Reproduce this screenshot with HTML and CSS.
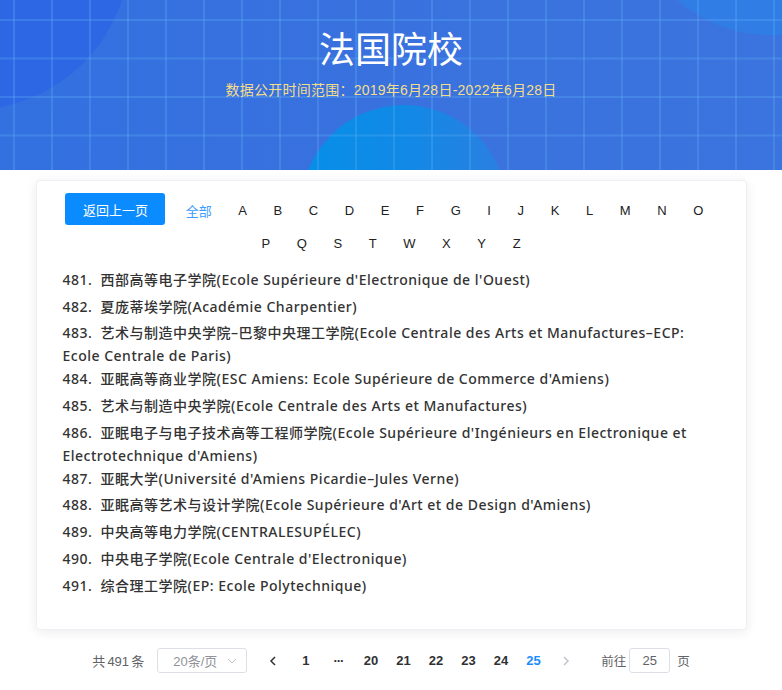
FILE: index.html
```html
<!DOCTYPE html>
<html lang="zh-CN">
<head>
<meta charset="utf-8">
<title>法国院校</title>
<link rel="stylesheet" href="styles.css">
</head>
<body>
<header class="hero">
  <div class="circle c1"></div>
  <div class="circle c2"></div>
  <div class="circle c3"></div>
  <div class="hero-text">
    <h1 class="title">法国院校</h1>
    <p class="sub">数据公开时间范围：2019年6月28日-2022年6月28日</p>
  </div>
</header>

<main class="card">
  <nav class="letters">
    <button class="back">返回上一页</button>
    <a class="letter active">全部</a>
    <a class="letter">A</a>
    <a class="letter">B</a>
    <a class="letter">C</a>
    <a class="letter">D</a>
    <a class="letter">E</a>
    <a class="letter">F</a>
    <a class="letter">G</a>
    <a class="letter">I</a>
    <a class="letter">J</a>
    <a class="letter">K</a>
    <a class="letter">L</a>
    <a class="letter">M</a>
    <a class="letter">N</a>
    <a class="letter">O</a>
    <a class="letter">P</a>
    <a class="letter">Q</a>
    <a class="letter">S</a>
    <a class="letter">T</a>
    <a class="letter">W</a>
    <a class="letter">X</a>
    <a class="letter">Y</a>
    <a class="letter">Z</a>
  </nav>
  <ul class="list">
    <li>481.&nbsp;&nbsp;西部高等电子学院(Ecole Supérieure d'Electronique de l'Ouest)</li>
    <li>482.&nbsp;&nbsp;夏庞蒂埃学院(Académie Charpentier)</li>
    <li>483.&nbsp;&nbsp;艺术与制造中央学院–巴黎中央理工学院(Ecole Centrale des Arts et Manufactures–ECP: Ecole Centrale de Paris)</li>
    <li>484.&nbsp;&nbsp;亚眠高等商业学院(ESC Amiens: Ecole Supérieure de Commerce d'Amiens)</li>
    <li>485.&nbsp;&nbsp;艺术与制造中央学院(Ecole Centrale des Arts et Manufactures)</li>
    <li>486.&nbsp;&nbsp;亚眠电子与电子技术高等工程师学院(Ecole Supérieure d'Ingénieurs en Electronique et Electrotechnique d'Amiens)</li>
    <li>487.&nbsp;&nbsp;亚眠大学(Université d'Amiens Picardie–Jules Verne)</li>
    <li>488.&nbsp;&nbsp;亚眠高等艺术与设计学院(Ecole Supérieure d'Art et de Design d'Amiens)</li>
    <li>489.&nbsp;&nbsp;中央高等电力学院(CENTRALESUPÉLEC)</li>
    <li>490.&nbsp;&nbsp;中央电子学院(Ecole Centrale d'Electronique)</li>
    <li>491.&nbsp;&nbsp;综合理工学院(EP: Ecole Polytechnique)</li>
  </ul>
</main>

<div class="pager">
  <span class="total">共 491 条</span>
  <div class="select">
    <span>20条/页</span>
    <svg class="caret" width="10" height="6" viewBox="0 0 10 6"><polyline points="1,1 5,5 9,1" fill="none" stroke="#c0c4cc" stroke-width="1"/></svg>
  </div>
  <span class="btn arrow"><svg width="8" height="10" viewBox="0 0 8 10"><polyline points="6,1 2,5 6,9" fill="none" stroke="#303133" stroke-width="1.5"/></svg></span>
  <span class="btn">1</span>
  <span class="btn more">···</span>
  <span class="btn">20</span>
  <span class="btn">21</span>
  <span class="btn">22</span>
  <span class="btn">23</span>
  <span class="btn">24</span>
  <span class="btn current">25</span>
  <span class="btn arrow"><svg width="8" height="10" viewBox="0 0 8 10"><polyline points="2,1 6,5 2,9" fill="none" stroke="#c0c4cc" stroke-width="1.5"/></svg></span>
  <span class="jump">前往</span>
  <span class="page-input">25</span>
  <span class="unit">页</span>
</div>
</body>
</html>
```

FILE: styles.css
```css
body {
  margin: 0;
  background: #fff;
  font-family: "Liberation Sans", "Noto Sans CJK SC", sans-serif;
}

.hero {
  position: relative;
  height: 170px;
  overflow: hidden;
  background: linear-gradient(90deg, #3370e0 0%, #3a72de 60%, #3b74de 100%);
  text-align: center;
}

.hero::after {
  content: "";
  position: absolute;
  inset: 0;
  background-image:
    linear-gradient(to right, rgba(95, 175, 245, 0.3) 2px, transparent 2px),
    linear-gradient(to bottom, rgba(95, 175, 245, 0.3) 2px, transparent 2px);
  background-size: 38px 38.5px;
  background-position: 13px 19px;
  z-index: 1;
}

.circle {
  position: absolute;
  border-radius: 50%;
}

.c1 {
  left: -190px;
  top: -210px;
  width: 320px;
  height: 320px;
  background: #2d67e4;
}

.c2 {
  left: 629px;
  top: -247px;
  width: 282px;
  height: 282px;
  background: #317de6;
}

.c3 {
  left: 301px;
  top: 105px;
  width: 206px;
  height: 206px;
  background: linear-gradient(90deg, #068fe8 0%, #1189e6 50%, #2c7fe1 100%);
}

.hero-text {
  position: relative;
  z-index: 2;
}

.title {
  margin: 0;
  padding-top: 26px;
  font-family: "Noto Sans CJK SC", sans-serif;
  font-size: 36px;
  line-height: 43px;
  font-weight: 400;
  color: #fff;
}

.sub {
  margin: 11px 0 0;
  font-size: 14px;
  line-height: 20px;
  letter-spacing: 0.25px;
  color: #f4dd8b;
}

.card {
  box-sizing: border-box;
  width: 711px;
  margin: 10px auto 0;
  padding: 12px 26px 29px;
  background: #fff;
  border: 1px solid #eef0f6;
  border-radius: 4px;
  box-shadow: 0 2px 12px rgba(0, 0, 0, 0.08);
}

.letters {
  display: flex;
  flex-wrap: wrap;
  justify-content: center;
  align-items: flex-end;
  row-gap: 5px;
  margin: 0 -10px;
}

.back {
  width: 100px;
  height: 32px;
  margin-right: 7px;
  padding: 0;
  border: 0;
  border-radius: 3px;
  background: #0a8bff;
  color: #fff;
  font-family: "Noto Sans CJK SC", sans-serif;
  font-size: 13px;
}

.letter {
  padding: 0 13.3px;
  font-size: 13px;
  line-height: 28px;
  color: #222;
}

.letter.active {
  color: #3d9cff;
  font-family: "Noto Sans CJK SC", sans-serif;
}

.list {
  list-style: none;
  margin: 10px 0 0;
  padding: 0;
  font-family: "Noto Sans", "Noto Sans CJK SC", sans-serif;
  font-size: 14px;
  font-weight: 500;
  letter-spacing: 0.5px;
  line-height: 23px;
  color: #333;
}

.list li {
  min-height: 26.7px;
}

.pager {
  display: flex;
  justify-content: center;
  align-items: center;
  margin-top: 18px;
  font-size: 13px;
  color: #606266;
}

.total {
  margin-right: 13px;
  word-spacing: -1.5px;
}

.select {
  box-sizing: border-box;
  display: flex;
  align-items: center;
  justify-content: space-between;
  width: 90px;
  height: 25px;
  padding: 0 9px 0 15px;
  margin-right: 10px;
  border: 1px solid #dcdfe6;
  border-radius: 3px;
  color: #909399;
}

.btn {
  display: flex;
  align-items: center;
  justify-content: center;
  width: 32.5px;
  height: 25px;
  font-weight: bold;
  color: #303133;
}

.btn.current {
  color: #1a8cff;
}

.btn.more {
  letter-spacing: -1px;
}

.jump {
  margin-left: 19px;
  margin-right: 3px;
  font-size: 12.5px;
}

.page-input {
  box-sizing: border-box;
  width: 41px;
  height: 25px;
  line-height: 23px;
  text-align: center;
  border: 1px solid #dcdfe6;
  border-radius: 3px;
  color: #606266;
}

.unit {
  margin-left: 7px;
  font-size: 12.5px;
}
```
